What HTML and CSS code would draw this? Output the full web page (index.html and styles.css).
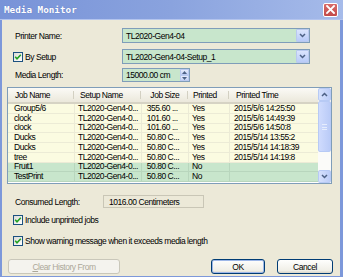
FILE: index.html
```html
<!DOCTYPE html>
<html>
<head>
<meta charset="utf-8">
<title>Media Monitor</title>
<link rel="stylesheet" href="styles.css">
</head>
<body>
<div class="window">
  <div class="titlebar">
    <span class="title">Media Monitor</span>
    <span class="close"><svg width="9" height="9" viewBox="0 0 9 9"><path d="M1 1 L8 8 M8 1 L1 8" stroke="#fff" stroke-width="1.8" stroke-linecap="square"/></svg></span>
  </div>
  <div class="client">
    <div class="field r-printer">
      <span class="lbl">Printer Name:</span>
      <div class="combo"><span class="combo-text">TL2020-Gen4-04</span><span class="combo-btn"><svg width="7" height="5" viewBox="0 0 7 5"><path d="M1 1 L3.5 3.5 L6 1" fill="none" stroke="#4d6185" stroke-width="1.5"/></svg></span></div>
    </div>
    <div class="field r-setup">
      <span class="chkwrap"><span class="chk"><svg width="8" height="8" viewBox="0 0 8 8"><path d="M1.2 3.8 L3 5.8 L6.8 1.8" fill="none" stroke="#21a121" stroke-width="1.6"/></svg></span><span>By Setup</span></span>
      <div class="combo"><span class="combo-text">TL2020-Gen4-04-Setup_1</span><span class="combo-btn"><svg width="7" height="5" viewBox="0 0 7 5"><path d="M1 1 L3.5 3.5 L6 1" fill="none" stroke="#4d6185" stroke-width="1.5"/></svg></span></div>
    </div>
    <div class="field r-media">
      <span class="lbl">Media Length:</span>
      <div class="spin"><span class="spin-text">15000.00 cm</span><span class="spin-btns"><span class="sb"><svg width="5" height="3" viewBox="0 0 5 3"><path d="M0 3 L2.5 0 L5 3Z" fill="#4d6185"/></svg></span><span class="sb"><svg width="5" height="3" viewBox="0 0 5 3"><path d="M0 0 L2.5 3 L5 0Z" fill="#4d6185"/></svg></span></span></div>
    </div>
    <div class="list">
      <div class="grid">
        <div class="hdr">
          <span class="hc c1">Job Name</span><span class="hc c2">Setup Name</span><span class="hc c3 center">Job Size</span><span class="hc c4">Printed</span><span class="hc c5">Printed Time</span>
        </div>
        <div class="row"><span class="c c1">Group5/6</span><span class="c c2">TL2020-Gen4-0...</span><span class="c c3">355.60 ...</span><span class="c c4">Yes</span><span class="c c5">2015/5/6 14:25:50</span></div>
        <div class="row"><span class="c c1">clock</span><span class="c c2">TL2020-Gen4-0...</span><span class="c c3">101.60 ...</span><span class="c c4">Yes</span><span class="c c5">2015/5/6 14:49:39</span></div>
        <div class="row"><span class="c c1">clock</span><span class="c c2">TL2020-Gen4-0...</span><span class="c c3">101.60 ...</span><span class="c c4">Yes</span><span class="c c5">2015/5/6 14:50:8</span></div>
        <div class="row"><span class="c c1">Ducks</span><span class="c c2">TL2020-Gen4-0...</span><span class="c c3">50.80 C...</span><span class="c c4">Yes</span><span class="c c5">2015/5/14 13:55:2</span></div>
        <div class="row"><span class="c c1">Ducks</span><span class="c c2">TL2020-Gen4-0...</span><span class="c c3">50.80 C...</span><span class="c c4">Yes</span><span class="c c5">2015/5/14 14:18:39</span></div>
        <div class="row"><span class="c c1">tree</span><span class="c c2">TL2020-Gen4-0...</span><span class="c c3">50.80 C...</span><span class="c c4">Yes</span><span class="c c5">2015/5/14 14:19:8</span></div>
        <div class="row unprinted"><span class="c c1">Fruit1</span><span class="c c2">TL2020-Gen4-0...</span><span class="c c3">50.80 C...</span><span class="c c4">No</span><span class="c c5"></span></div>
        <div class="row unprinted"><span class="c c1">TestPrint</span><span class="c c2">TL2020-Gen4-0...</span><span class="c c3">50.80 C...</span><span class="c c4">No</span><span class="c c5"></span></div>
      </div>
      <div class="vscroll">
        <span class="sbtn"><svg width="7" height="5" viewBox="0 0 7 5"><path d="M1 4 L3.5 1.5 L6 4" fill="none" stroke="#4d6185" stroke-width="1.5"/></svg></span>
        <span class="thumb"><span class="grip"></span></span>
        <span class="track"></span>
        <span class="sbtn"><svg width="7" height="5" viewBox="0 0 7 5"><path d="M1 1 L3.5 3.5 L6 1" fill="none" stroke="#4d6185" stroke-width="1.5"/></svg></span>
      </div>
    </div>
    <div class="field r-consumed">
      <span class="lbl">Consumed Length:</span>
      <span class="readonly">1016.00 Centimeters</span>
    </div>
    <div class="chkrow r-inc">
      <span class="chk"><svg width="8" height="8" viewBox="0 0 8 8"><path d="M1.2 3.8 L3 5.8 L6.8 1.8" fill="none" stroke="#21a121" stroke-width="1.6"/></svg></span><span>Include unprinted jobs</span>
    </div>
    <div class="chkrow r-warn">
      <span class="chk"><svg width="8" height="8" viewBox="0 0 8 8"><path d="M1.2 3.8 L3 5.8 L6.8 1.8" fill="none" stroke="#21a121" stroke-width="1.6"/></svg></span><span>Show warning message when it exceeds media length</span>
    </div>
    <div class="buttons">
      <span class="btn disabled"><u>C</u>lear History From</span>
      <span class="spacer"></span>
      <span class="btn ok">OK</span>
      <span class="btn cancel">Cancel</span>
    </div>
  </div>
</div>
</body>
</html>
```
FILE: styles.css
```css
* { box-sizing: border-box; }
html, body { margin: 0; padding: 0; }
body {
  width: 343px;
  height: 277px;
  overflow: hidden;
  font-family: "Liberation Sans", Arial, sans-serif;
  font-size: 8.5px;
  letter-spacing: -0.45px;
  color: #000;
}
.window {
  width: 343px;
  height: 277px;
  background: #7d98da;
  display: flex;
  flex-direction: column;
}
.titlebar {
  height: 20px;
  flex: none;
  display: flex;
  align-items: center;
  justify-content: space-between;
  padding: 0 5px 0 4px;
  background: linear-gradient(to right, #7893d8 0%, #8aa3de 50%, #a6bbea 100%);
  border-bottom: 1px solid #b3c4ee;
}
.title {
  font-family: "DejaVu Sans Mono", monospace;
  font-weight: bold;
  font-size: 9.3px;
  letter-spacing: 0;
  color: #fff;
  text-shadow: 0 0 1px #5570b8;
}
.close {
  width: 15px;
  height: 14px;
  border: 1px solid #fff;
  border-radius: 2px;
  background: linear-gradient(#d86a68, #c24a4a);
  display: flex;
  align-items: center;
  justify-content: center;
}
.client {
  flex: 1;
  margin: 0 3px 1px 2px;
  background: #ece9d8;
  padding: 8px 0 0 5px;
  display: flex;
  flex-direction: column;
}
.field {
  display: grid;
  grid-template-columns: 115px 188px;
  align-items: center;
}
.lbl { padding-left: 8px; }
.r-printer { height: 15px; }
.r-setup { height: 15px; margin-top: 6px; }
.r-media { height: 14px; margin-top: 4px; }
.combo {
  height: 15px;
  border: 1px solid #7f9db9;
  background: #c8e6cc;
  display: flex;
  align-items: center;
  padding-left: 3px;
}
.combo-text { flex: 1; }
.combo-btn {
  width: 13px;
  height: 13px;
  border: 1px solid #b9c9ef;
  border-radius: 1px;
  background: linear-gradient(#dbe5fd, #b8cbf8);
  display: flex;
  align-items: center;
  justify-content: center;
}
.chkwrap {
  display: flex;
  align-items: center;
  gap: 2px;
  padding-left: 6px;
}
.chk {
  width: 10px;
  height: 10px;
  flex: none;
  border: 1px solid #1c5180;
  background: linear-gradient(135deg, #dcdcd6, #fff);
  display: flex;
  align-items: center;
  justify-content: center;
}
.spin {
  width: 68px;
  height: 14px;
  border: 1px solid #7f9db9;
  background: #c8e6cc;
  display: flex;
  align-items: center;
  padding-left: 3px;
}
.spin-text { flex: 1; }
.spin-btns {
  width: 9px;
  height: 12px;
  display: flex;
  flex-direction: column;
}
.sb {
  flex: 1;
  border: 1px solid #b9c9ef;
  background: linear-gradient(#e6ecfb, #c6d3f5);
  display: flex;
  align-items: center;
  justify-content: center;
}
.list {
  margin-top: 5px;
  width: 325px;
  height: 97px;
  border: 1px solid #7f9db9;
  background: #fff;
  display: flex;
}
.grid {
  width: 310px;
  display: flex;
  flex-direction: column;
}
.hdr {
  height: 16px;
  display: flex;
  background: linear-gradient(#fbfaf6, #ebe8db);
  border-bottom: 2px solid #d6d3c4;
}
.hc {
  display: flex;
  align-items: center;
  padding-left: 7px;
  border-right: 1px solid transparent;
  position: relative;
}
.hc::after {
  content: "";
  position: absolute;
  right: 0;
  top: 3px;
  bottom: 3px;
  width: 1px;
  background: #d3d0c2;
}
.hc.c5::after { display: none; }
.hc.center { justify-content: center; padding-left: 0; }
.c1 { width: 67px; }
.c2 { width: 66.7px; }
.c3 { width: 47.3px; }
.c4 { width: 41px; }
.c5 { width: 88px; }
.hc.c2 { padding-left: 5px; }
.hc.c4 { padding-left: 4px; }
.hc.c5 { padding-left: 6px; }
.row {
  height: 9.75px;
  display: flex;
  background: #fbfbe1;
  border-bottom: 1px solid #ecebd6;
}
.row.unprinted { background: #c8e6cc; border-bottom-color: #b8d6bd; }
.c {
  display: flex;
  align-items: center;
  padding-left: 6px;
  border-right: 1px solid #ecebd6;
  white-space: nowrap;
  overflow: hidden;
  line-height: 9px;
}
.row.unprinted .c { border-right-color: #b8d6bd; }
.c.c2 { padding-left: 3px; }
.c.c3 { padding-left: 5px; }
.c.c4 { padding-left: 3px; }
.c.c5 { padding-left: 4px; border-right: none; }
.vscroll {
  width: 13px;
  display: flex;
  flex-direction: column;
  background: #f6f5ef;
}
.sbtn {
  height: 13px;
  flex: none;
  border: 1px solid #b7caf5;
  border-radius: 2px;
  background: linear-gradient(to right, #d6e1fd, #bccdf8);
  display: flex;
  align-items: center;
  justify-content: center;
}
.thumb {
  height: 51px;
  flex: none;
  border: 1px solid #b7caf5;
  border-radius: 2px;
  background: linear-gradient(to right, #cfdbfd, #bacbf7);
  display: flex;
  align-items: center;
  justify-content: center;
}
.grip {
  width: 5px;
  height: 6px;
  border-top: 1px solid #e6edfd;
  border-bottom: 1px solid #e6edfd;
  background: linear-gradient(transparent 2px, #e6edfd 2px, #e6edfd 3px, transparent 3px);
}
.track { flex: 1; background: #fbfbf9; }
.r-consumed {
  grid-template-columns: 96px 101px;
  height: 13px;
  margin-top: 11px;
}
.readonly {
  height: 13px;
  border: 1px solid #c9c6b6;
  background: #ece9d8;
  display: flex;
  align-items: center;
  padding-left: 5px;
}
.chkrow {
  display: flex;
  align-items: center;
  gap: 2px;
  height: 10px;
  padding-left: 6px;
}
.r-inc { margin-top: 7px; }
.r-warn { margin-top: 11px; }
.buttons {
  margin-top: 13px;
  height: 15px;
  display: flex;
  padding-left: 1px;
  padding-right: 7px;
  gap: 0;
}
.spacer { flex: 1; }
.btn {
  height: 15px;
  display: flex;
  align-items: center;
  justify-content: center;
  border: 1px solid #003c74;
  border-radius: 3px;
  background: linear-gradient(#fefefd, #f0efe7 80%, #d8d4c6);
}
.btn.disabled {
  width: 112px;
  border-color: #c9c7ba;
  color: #aca899;
  background: #f4f3ee;
}
.btn.ok {
  width: 54px;
  box-shadow: inset 0 0 0 1px #9db7e8;
}
.btn.cancel {
  width: 56px;
  margin-left: 12px;
}
```
